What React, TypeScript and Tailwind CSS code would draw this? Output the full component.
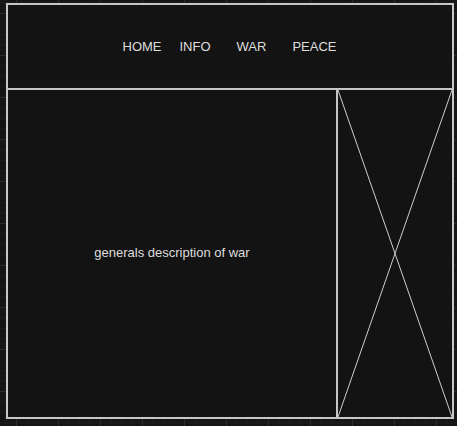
import React from "react";

export default function App() {
  return (
    <div
      className="w-[457px] h-[426px] pt-[3px] pl-[6px] bg-[#141414] [background-image:linear-gradient(#2a2a2a_1px,transparent_1px),linear-gradient(90deg,#2a2a2a_1px,transparent_1px),linear-gradient(#1d1d1d_1px,transparent_1px),linear-gradient(90deg,#1d1d1d_1px,transparent_1px)] [background-size:42px_42px,42px_42px,10.5px_10.5px,10.5px_10.5px] [background-position:16px_13px,16px_13px,16px_13px,16px_13px]"
      style={{ fontFamily: '"Liberation Sans", Arial, sans-serif' }}
    >
      <div className="w-[448px] h-[416px] border-2 border-[#c6c6c6] bg-[#131313] flex flex-col">
        <header className="h-[85px] shrink-0 border-b-2 border-[#c6c6c6] flex items-center justify-center text-[13px] text-[#dedede] pt-[1px] pr-[1px]">
          <span>HOME</span>
          <span className="ml-[18px]">INFO</span>
          <span className="ml-[26px]">WAR</span>
          <span className="ml-[26px]">PEACE</span>
        </header>
        <div className="flex-1 flex">
          <div className="flex-1 flex items-center justify-center text-[13px] text-[#dedede] pb-[2px]">
            generals description of war
          </div>
          <div className="w-[116px] shrink-0 border-l-2 border-[#c6c6c6] relative">
            <svg
              className="absolute inset-0 w-full h-full"
              viewBox="0 0 114 328"
              preserveAspectRatio="none"
            >
              <line x1="0" y1="0" x2="114" y2="328" stroke="#d0d0d0" strokeWidth="1" />
              <line x1="114" y1="0" x2="0" y2="328" stroke="#d0d0d0" strokeWidth="1" />
            </svg>
          </div>
        </div>
      </div>
    </div>
  );
}
